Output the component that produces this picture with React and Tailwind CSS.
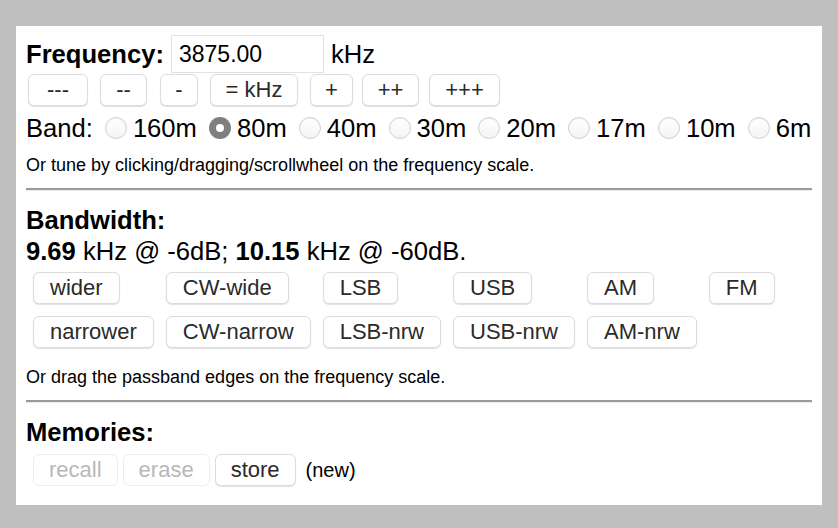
import React from 'react';

const font = { fontFamily: '"Liberation Sans", Arial, Helvetica, sans-serif' };

const Btn = ({ children, className = '', disabled = false }) => (
    <button
        disabled={disabled}
        className={`h-[32px] rounded-[6px] border border-[#dcdcdc] bg-white shadow-[0_1px_1px_rgba(0,0,0,0.12)] text-[22px] leading-none whitespace-nowrap ${disabled ? 'text-[#b8b8b8] border-[#ececec] shadow-none' : 'text-[#2a2a2a]'} ${className}`}
    >
        {children}
    </button>
);

const Radio = ({ checked }) =>
    checked ? (
        <span className="w-[22px] h-[22px] rounded-full bg-[#7f7f7f] flex items-center justify-center shrink-0">
            <span className="block w-[8px] h-[8px] rounded-full bg-white"></span>
        </span>
    ) : (
        <span className="block w-[22px] h-[22px] rounded-full border border-[#cfcfcf] bg-gradient-to-b from-white to-[#f4f4f4] shadow-[inset_0_1px_1px_rgba(0,0,0,0.05)] shrink-0"></span>
    );

const steps = [
    { label: '---', w: 'w-[60px]', ml: 'ml-[2px]' },
    { label: '--', w: 'w-[47px]', ml: 'ml-[12px]' },
    { label: '-', w: 'w-[38px]', ml: 'ml-[13px]' },
    { label: '= kHz', w: 'w-[88px]', ml: 'ml-[12px]' },
    { label: '+', w: 'w-[43px]', ml: 'ml-[12px]' },
    { label: '++', w: 'w-[57px]', ml: 'ml-[9px]' },
    { label: '+++', w: 'w-[71px]', ml: 'ml-[10px]' },
];

const bands = ['160m', '80m', '40m', '30m', '20m', '17m', '10m', '6m'];

const bwRow1 = ['wider', 'CW-wide', 'LSB', 'USB', 'AM', 'FM'];
const bwRow2 = ['narrower', 'CW-narrow', 'LSB-nrw', 'USB-nrw', 'AM-nrw'];

const Rule = () => (
    <div className="h-[3px] border-t-2 border-t-[#9a9a9a] border-b border-b-[#ececec]"></div>
);

export default function App() {
    return (
        <div className="w-[838px] h-[528px] bg-[#c0c0c0] pt-[26px] px-[16px] text-black" style={font}>
            <div className="h-[479px] bg-white px-[10px] pt-[9px]">
                {/* Frequency */}
                <div className="flex items-center h-[38px]">
                    <span className="text-[25.6px] font-bold">Frequency:</span>
                    <div className="ml-[7px] w-[153px] h-[38px] border border-[#e2e2e2] flex items-center pl-[7px] text-[23px]">
                        3875.00
                    </div>
                    <span className="ml-[7px] text-[25.6px]">kHz</span>
                </div>

                <div className="flex mt-[1px]">
                    {steps.map((s) => (
                        <Btn key={s.label} className={`${s.w} ${s.ml}`}>
                            {s.label}
                        </Btn>
                    ))}
                </div>

                <div className="flex items-center h-[30px] mt-[7px] text-[25.6px]">
                    <span>Band:</span>
                    {bands.map((b) => (
                        <React.Fragment key={b}>
                            <span className="ml-[12px]">
                                <Radio checked={b === '80m'} />
                            </span>
                            <span className="ml-[6px]">{b}</span>
                        </React.Fragment>
                    ))}
                </div>

                <p className="mt-[12px] text-[18px] leading-[20px]">
                    Or tune by clicking/dragging/scrollwheel on the frequency scale.
                </p>

                <div className="mt-[13px]">
                    <Rule />
                </div>

                {/* Bandwidth */}
                <div className="mt-[17px] text-[25.6px] leading-[24px] font-bold">Bandwidth:</div>
                <div className="mt-[6px] text-[25.6px] leading-[26px]">
                    <b>9.69</b> kHz @ -6dB; <b>10.15</b> kHz @ -60dB.
                </div>

                <div className="mt-[8px] ml-[7px] grid grid-cols-[auto_auto_auto_auto_auto_auto] justify-start justify-items-start gap-x-[12px] gap-y-[12px]">
                    {bwRow1.map((l) => (
                        <Btn key={l} className="px-[16px]">
                            {l}
                        </Btn>
                    ))}
                    {bwRow2.map((l) => (
                        <Btn key={l} className="px-[16px]">
                            {l}
                        </Btn>
                    ))}
                </div>

                <p className="mt-[19px] text-[18px] leading-[20px]">
                    Or drag the passband edges on the frequency scale.
                </p>

                <div className="mt-[13px]">
                    <Rule />
                </div>

                {/* Memories */}
                <div className="mt-[17px] text-[25.6px] leading-[24px] font-bold">Memories:</div>
                <div className="flex items-center mt-[10px] ml-[7px]">
                    <Btn disabled className="px-[15px]">recall</Btn>
                    <Btn disabled className="px-[15px] ml-[5px]">erase</Btn>
                    <Btn className="px-[15px] ml-[5px]">store</Btn>
                    <span className="ml-[10px] text-[20px]">(new)</span>
                </div>
            </div>
        </div>
    );
}
